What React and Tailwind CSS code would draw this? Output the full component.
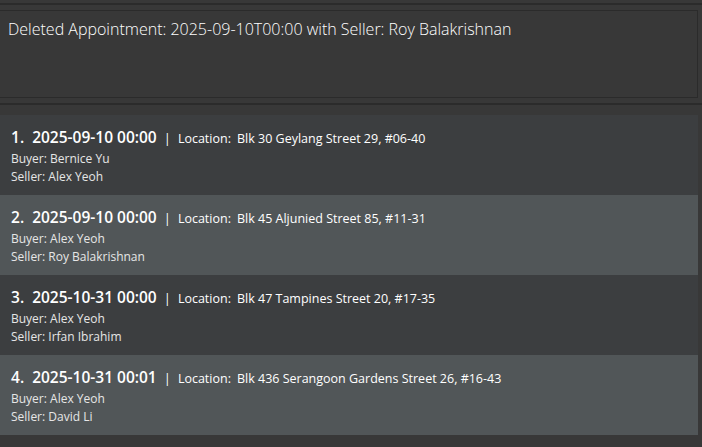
import React from 'react';

const appointments = [
  { date: '2025-09-10 00:00', location: 'Blk 30 Geylang Street 29, #06-40', buyer: 'Bernice Yu', seller: 'Alex Yeoh' },
  { date: '2025-09-10 00:00', location: 'Blk 45 Aljunied Street 85, #11-31', buyer: 'Alex Yeoh', seller: 'Roy Balakrishnan' },
  { date: '2025-10-31 00:00', location: 'Blk 47 Tampines Street 20, #17-35', buyer: 'Alex Yeoh', seller: 'Irfan Ibrahim' },
  { date: '2025-10-31 00:01', location: 'Blk 436 Serangoon Gardens Street 26, #16-43', buyer: 'Alex Yeoh', seller: 'David Li' },
];

function AppointmentCard({ index, appt }) {
  const bg = index % 2 === 0 ? 'bg-[#3c3e40]' : 'bg-[#515658]';
  return (
    <div className={`${bg} h-[80px] pl-[11px] pt-[12px]`}>
      <div className="flex items-baseline text-white leading-[20px]">
        <span className="text-[15.5px] font-semibold">{index + 1}.</span>
        <span className="text-[15.5px] font-semibold ml-[8px]">{appt.date}</span>
        <span className="text-[13px] ml-[7px]">|</span>
        <span className="text-[12.5px] ml-[7px]">Location:</span>
        <span className="text-[12.5px] ml-[6px]">{appt.location}</span>
      </div>
      <div className="text-[12px] text-[#e6e6e6] leading-[18px] mt-[1px]">Buyer: {appt.buyer}</div>
      <div className="text-[12px] text-[#e6e6e6] leading-[18px]">Seller: {appt.seller}</div>
    </div>
  );
}

export default function App() {
  return (
    <div
      className="w-[702px] h-[447px] bg-[#383838] overflow-hidden"
      style={{ fontFamily: '"Open Sans", "Noto Sans", sans-serif' }}
    >
      {/* command box bottom edge */}
      <div className="h-[3px]" />
      <div className="h-[2px] bg-[#2b2b2b]" />

      {/* result display */}
      <div className="mt-[5px] mr-[4px] h-[88px] border border-[#2b2b2b] border-l-0 pl-[8px] pt-[7px]">
        <p className="text-[16px] font-light leading-[22px] text-white">
          Deleted Appointment: 2025-09-10T00:00 with Seller: Roy Balakrishnan
        </p>
      </div>

      <div className="mt-[5px] h-[2px] bg-[#2b2b2b]" />

      {/* appointment list */}
      <div className="mt-[10px] mr-[4px] flex flex-col">
        {appointments.map((appt, i) => (
          <AppointmentCard key={i} index={i} appt={appt} />
        ))}
      </div>
    </div>
  );
}
